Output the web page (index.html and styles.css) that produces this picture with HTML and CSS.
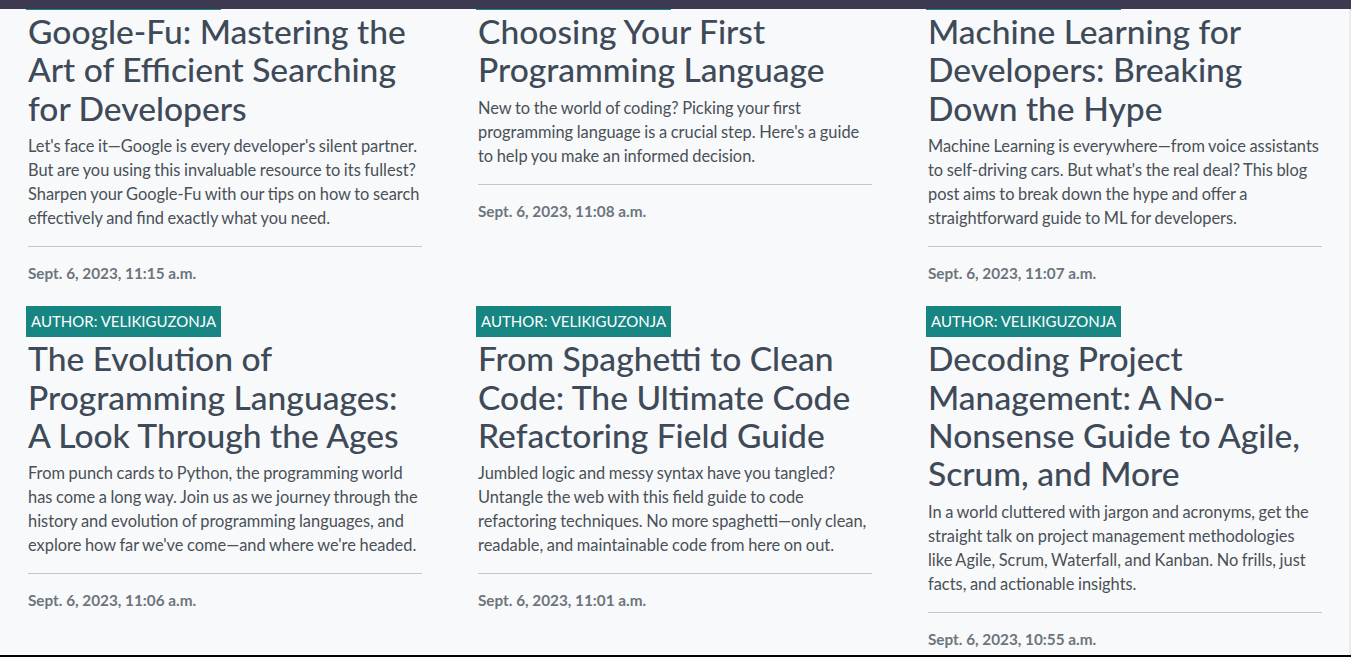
FILE: index.html
```html
<!DOCTYPE html>
<html lang="en">
<head>
<meta charset="utf-8">
<title>Blog posts</title>
<link rel="stylesheet" href="styles.css">
</head>
<body>
<header class="topbar"></header>
<main class="posts">
  <article class="post">
    <span class="badge">Author: velikiguzonja</span>
    <div class="post-body">
      <h2 class="post-title">Google-Fu: Mastering the Art of Efficient Searching for Developers</h2>
      <p class="post-text">Let's face it—Google is every developer's silent partner. But are you using this invaluable resource to its fullest? Sharpen your Google-Fu with our tips on how to search effectively and find exactly what you need.</p>
      <hr class="post-rule">
      <div class="post-date">Sept. 6, 2023, 11:15 a.m.</div>
    </div>
  </article>
  <article class="post">
    <span class="badge">Author: velikiguzonja</span>
    <div class="post-body">
      <h2 class="post-title">Choosing Your First Programming Language</h2>
      <p class="post-text">New to the world of coding? Picking your first programming language is a crucial step. Here's a guide to help you make an informed decision.</p>
      <hr class="post-rule">
      <div class="post-date">Sept. 6, 2023, 11:08 a.m.</div>
    </div>
  </article>
  <article class="post">
    <span class="badge">Author: velikiguzonja</span>
    <div class="post-body">
      <h2 class="post-title">Machine Learning for Developers: Breaking Down the Hype</h2>
      <p class="post-text">Machine Learning is everywhere—from voice assistants to self-driving cars. But what's the real deal? This blog post aims to break down the hype and offer a straightforward guide to ML for developers.</p>
      <hr class="post-rule">
      <div class="post-date">Sept. 6, 2023, 11:07 a.m.</div>
    </div>
  </article>
  <article class="post">
    <span class="badge">Author: velikiguzonja</span>
    <div class="post-body">
      <h2 class="post-title">The Evolution of Programming Languages: A Look Through the Ages</h2>
      <p class="post-text">From punch cards to Python, the programming world has come a long way. Join us as we journey through the history and evolution of programming languages, and explore how far we've come—and where we're headed.</p>
      <hr class="post-rule">
      <div class="post-date">Sept. 6, 2023, 11:06 a.m.</div>
    </div>
  </article>
  <article class="post">
    <span class="badge">Author: velikiguzonja</span>
    <div class="post-body">
      <h2 class="post-title">From Spaghetti to Clean Code: The Ultimate Code Refactoring Field Guide</h2>
      <p class="post-text">Jumbled logic and messy syntax have you tangled? Untangle the web with this field guide to code refactoring techniques. No more spaghetti—only clean, readable, and maintainable code from here on out.</p>
      <hr class="post-rule">
      <div class="post-date">Sept. 6, 2023, 11:01 a.m.</div>
    </div>
  </article>
  <article class="post">
    <span class="badge">Author: velikiguzonja</span>
    <div class="post-body">
      <h2 class="post-title">Decoding Project Management: A No-Nonsense Guide to Agile, Scrum, and More</h2>
      <p class="post-text">In a world cluttered with jargon and acronyms, get the straight talk on project management methodologies like Agile, Scrum, Waterfall, and Kanban. No frills, just facts, and actionable insights.</p>
      <hr class="post-rule">
      <div class="post-date">Sept. 6, 2023, 10:55 a.m.</div>
    </div>
  </article>
</main>
<div class="edge-right"></div>
<div class="edge-bottom"></div>
</body>
</html>
```
FILE: styles.css
```css
html, body {
  margin: 0;
  padding: 0;
  height: 100%;
  overflow: hidden;
}
body {
  background: #f8f9fa;
  font-family: Lato, "Noto Sans", sans-serif;
  color: #495057;
}
.topbar {
  position: fixed;
  top: 0;
  left: 0;
  right: 0;
  height: 9px;
  background: #3d3950;
  z-index: 5;
}
.edge-right {
  position: fixed;
  top: 9px;
  right: 0;
  bottom: 0;
  width: 2px;
  background: #ebebeb;
  z-index: 4;
}
.edge-bottom {
  position: fixed;
  left: 0;
  right: 0;
  bottom: 0;
  height: 2px;
  background: #000;
  z-index: 6;
}
.posts {
  display: grid;
  grid-template-columns: repeat(3, 396px);
  column-gap: 54px;
  row-gap: 21px;
  align-items: start;
  padding-left: 26px;
  margin-top: -21px;
}
.post {
  display: flex;
  flex-direction: column;
  align-items: flex-start;
}
.badge {
  display: inline-block;
  background: #178582;
  color: #fff;
  text-transform: uppercase;
  font-size: 15px;
  line-height: 23px;
  padding: 4px 5px;
}
.post-body {
  margin-left: 2px;
  width: 394px;
}
.post-title {
  margin: 2px 0 7px;
  font-size: 33.6px;
  line-height: 38.4px;
  font-weight: 500;
  color: #3f4a59;
}
.post-text {
  margin: 0 0 16px;
  font-size: 16.4px;
  line-height: 24px;
  word-spacing: -0.6px;
}
.post-rule {
  margin: 0 0 14px;
  border: 0;
  border-top: 1px solid #c6c7c9;
  height: 0;
}
.post-date {
  font-size: 15.3px;
  line-height: 24px;
  font-weight: 700;
  color: #6c757d;
}
```
